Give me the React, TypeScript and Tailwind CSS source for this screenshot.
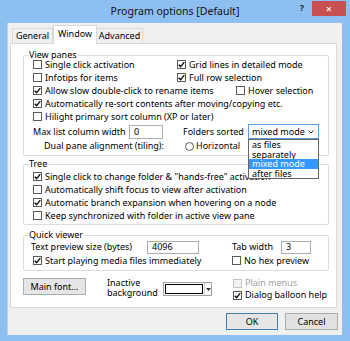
import React from "react";

function Check({ checked = false, disabled = false }: { checked?: boolean; disabled?: boolean }) {
  return (
    <span
      className={
        disabled
          ? "w-[9px] h-[9px] border border-[#c4c4c4] bg-[#f4f4f4] flex items-center justify-center shrink-0"
          : "w-[9px] h-[9px] border border-[#5a5a5a] bg-white flex items-center justify-center shrink-0"
      }
    >
      {checked && (
        <svg width="7" height="7" viewBox="0 0 7 7">
          <path d="M0.7 3.7 L2.6 5.6 L6.3 1.1" stroke="#111" strokeWidth="1.4" fill="none" />
        </svg>
      )}
    </span>
  );
}

function CItem({ label, checked = false, disabled = false }: { label: string; checked?: boolean; disabled?: boolean }) {
  return (
    <div className="flex items-center gap-[3px] whitespace-nowrap">
      <Check checked={checked} disabled={disabled} />
      <span className={disabled ? "text-[#a0a0a0]" : ""}>{label}</span>
    </div>
  );
}

function Legend({ children, extra = "" }: { children: React.ReactNode; extra?: string }) {
  return (
    <div className={"-mt-[7px] -ml-[5px] self-start bg-white px-[1px] h-[12px] leading-[12px] whitespace-nowrap " + extra}>
      {children}
    </div>
  );
}

export default function App() {
  return (
    <div className="w-[350px] h-[341px] bg-[#8dbff1] flex flex-col overflow-hidden font-['Noto_Sans',sans-serif] text-black text-[9px]">
      {/* Title bar */}
      <div className="h-[23px] flex items-start shrink-0">
        <div className="flex-1 pl-[54px] h-[23px] flex items-center justify-center text-[10.5px] text-[#111]">
          Program options [Default]
        </div>
        <div className="w-[54px] flex items-start">
          <div className="w-[12px] h-[15px] flex items-center justify-center text-[9px] font-bold text-[#222]">?</div>
          <div className="ml-[4px] mt-[1px] w-[34px] h-[15px] bg-[#c75050] flex items-center justify-center text-white text-[11px] leading-none">
            ×
          </div>
        </div>
      </div>

      {/* Client */}
      <div className="ml-[7px] w-[335px] h-[312px] bg-[#f0f0f0] flex flex-col shrink-0 border-l border-[#b7d6f5]">
        {/* Tabs */}
        <div className="flex items-end h-[20px] pl-[4px] relative z-10">
          <div className="w-[41px] h-[15px] border border-b-0 border-[#d9d9d9] bg-[#f0f0f0] flex items-center justify-center">General</div>
          <div className="w-[44px] h-[19px] -mb-[1px] border border-b-0 border-[#d9d9d9] bg-white flex items-center justify-center pb-[2px]">Window</div>
          <div className="w-[46px] h-[15px] border border-b-0 border-l-0 border-[#d9d9d9] bg-[#f0f0f0] flex items-center justify-center">Advanced</div>
        </div>

        {/* Panel */}
        <div className="ml-[2px] w-[327px] h-[265px] border border-[#d9d9d9] bg-white flex flex-col pl-[12px] pr-[7px] pt-[11px]">
          {/* View panes */}
          <div className="border border-[#dcdcdc] rounded-[2px] flex flex-col pl-[9px] pb-[2px]">
            <Legend extra="-mb-[3px]">View panes</Legend>
            <div className="flex items-center h-[13px]">
              <div className="w-[144px]"><CItem label="Single click activation" /></div>
              <CItem label="Grid lines in detailed mode" checked />
            </div>
            <div className="flex items-center h-[13px]">
              <div className="w-[144px]"><CItem label="Infotips for items" /></div>
              <CItem label="Full row selection" checked />
            </div>
            <div className="flex items-center h-[13px]">
              <div className="w-[203px]"><CItem label="Allow slow double-click to rename items" checked /></div>
              <CItem label="Hover selection" />
            </div>
            <div className="flex items-center h-[13px]">
              <CItem label="Automatically re-sort contents after moving/copying etc." checked />
            </div>
            <div className="flex items-center h-[13px]">
              <CItem label="Hilight primary sort column (XP or later)" />
            </div>
            <div className="flex items-center h-[15px] mt-[1px]">
              <div className="w-[96px] whitespace-nowrap">Max list column width</div>
              <div className="w-[34px] h-[14px] border border-[#abadb3] bg-white pl-[4px] flex items-center">0</div>
              <div className="ml-[20px] w-[65px] whitespace-nowrap">Folders sorted</div>
              <div className="relative w-[71px] h-[15px] border border-[#569de5] bg-white flex items-center pl-[3px] pr-[4px] justify-between">
                <span>mixed mode</span>
                <svg width="6" height="4" viewBox="0 0 6 4">
                  <path d="M0.5 0.5 L3 3 L5.5 0.5" stroke="#333" strokeWidth="1" fill="none" />
                </svg>
                <div className="absolute left-[-1px] top-[14px] w-[71px] border border-[#646464] bg-white flex flex-col z-20">
                  <div className="h-[9.5px] leading-[9.5px] pl-[3px]">as files</div>
                  <div className="h-[9.5px] leading-[9.5px] pl-[3px]">separately</div>
                  <div className="h-[9.5px] leading-[9.5px] pl-[3px] bg-[#3399ff] text-white">mixed mode</div>
                  <div className="h-[9.5px] leading-[9.5px] pl-[3px]">after files</div>
                </div>
              </div>
            </div>
            <div className="flex items-center h-[14px] pl-[11px]">
              <div className="w-[141px] whitespace-nowrap">Dual pane alignment (tiling):</div>
              <div className="flex items-center gap-[2px]">
                <span className="w-[9px] h-[9px] rounded-full border border-[#5a5a5a] bg-white" />
                <span>Horizontal</span>
              </div>
            </div>
          </div>

          {/* Tree */}
          <div className="mt-[8px] border border-[#dcdcdc] rounded-[2px] flex flex-col pl-[9px] pb-[2px]">
            <Legend>Tree</Legend>
            <div className="flex items-center h-[13px]">
              <CItem label={'Single click to change folder & "hands-free" activation'} checked />
            </div>
            <div className="flex items-center h-[13px]">
              <CItem label="Automatically shift focus to view after activation" />
            </div>
            <div className="flex items-center h-[13px]">
              <CItem label="Automatic branch expansion when hovering on a node" checked />
            </div>
            <div className="flex items-center h-[13px]">
              <CItem label="Keep synchronized with folder in active view pane" />
            </div>
          </div>

          {/* Quick viewer */}
          <div className="mt-[10px] border border-[#dcdcdc] rounded-[2px] flex flex-col pl-[9px] pb-[3px]">
            <Legend extra="-mb-[1px]">Quick viewer</Legend>
            <div className="flex items-center h-[14px] -ml-[2px]">
              <div className="w-[116px] whitespace-nowrap">Text preview size (bytes)</div>
              <div className="w-[52px] h-[13px] border border-[#abadb3] bg-white pl-[4px] flex items-center">4096</div>
              <div className="ml-[33px] w-[49px] whitespace-nowrap">Tab width</div>
              <div className="w-[30px] h-[13px] border border-[#abadb3] bg-white pl-[4px] flex items-center">3</div>
            </div>
            <div className="flex items-center h-[13px]">
              <div className="w-[199px]"><CItem label="Start playing media files immediately" checked /></div>
              <CItem label="No hex preview" />
            </div>
          </div>

          {/* Bottom row */}
          <div className="mt-[6px] flex items-start">
            <div className="mt-[1px] w-[63px] h-[17px] border border-[#acacac] bg-[#e5e5e5] flex items-center justify-center">Main font...</div>
            <div className="ml-[21px] w-[56px] mt-[1px] leading-[9.5px] flex flex-col">
              <span>Inactive</span>
              <span>background</span>
            </div>
            <div className="mt-[5px] w-[49px] h-[14px] border border-[#a0a0a0] bg-white flex items-center pl-[1px]">
              <div className="w-[38px] h-[10px] border border-black bg-white" />
              <div className="ml-[1px] h-[12px] border-l border-[#d0d0d0] flex-1 flex items-center justify-center">
                <svg width="5" height="3" viewBox="0 0 5 3">
                  <path d="M0 0 L5 0 L2.5 3 Z" fill="#333" />
                </svg>
              </div>
            </div>
            <div className="ml-[21px] flex flex-col">
              <div className="h-[12px] flex items-center"><CItem label="Plain menus" disabled /></div>
              <div className="h-[12px] flex items-center"><CItem label="Dialog balloon help" checked /></div>
            </div>
          </div>
        </div>

        {/* Buttons */}
        <div className="mt-[5px] flex justify-end gap-[7px] pr-[4px]">
          <div className="w-[52px] h-[17px] border border-[#3c7fb1] bg-[#e5e5e5] flex items-center justify-center">OK</div>
          <div className="w-[53px] h-[17px] border border-[#acacac] bg-[#e1e1e1] flex items-center justify-center">Cancel</div>
        </div>
      </div>
    </div>
  );
}
